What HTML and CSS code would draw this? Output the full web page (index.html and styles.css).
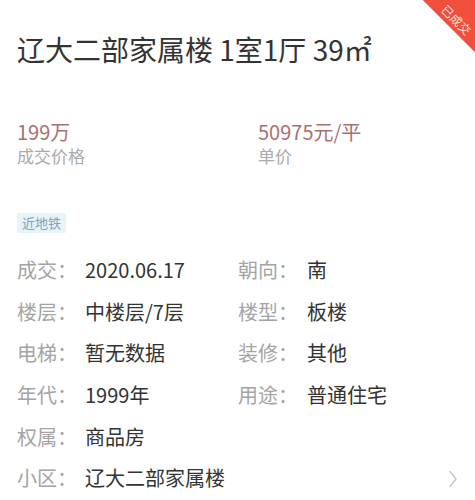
FILE: index.html
```html
<!DOCTYPE html>
<html lang="zh-CN">
<head>
<meta charset="utf-8">
<link rel="stylesheet" href="styles.css">
</head>
<body>
<div class="page">
  <div class="ribbon"><span>已成交</span></div>
  <h1 class="title">辽大二部家属楼 1室1厅 39㎡</h1>
  <div class="prices">
    <div class="price">
      <div class="price-val">199万</div>
      <div class="price-lbl">成交价格</div>
    </div>
    <div class="price">
      <div class="price-val">50975元/平</div>
      <div class="price-lbl">单价</div>
    </div>
  </div>
  <div class="tags"><span class="tag">近地铁</span></div>
  <div class="details">
    <span class="lbl">成交：</span><span class="val">2020.06.17</span>
    <span class="lbl">朝向：</span><span class="val">南</span>
    <span class="lbl">楼层：</span><span class="val">中楼层/7层</span>
    <span class="lbl">楼型：</span><span class="val">板楼</span>
    <span class="lbl">电梯：</span><span class="val">暂无数据</span>
    <span class="lbl">装修：</span><span class="val">其他</span>
    <span class="lbl">年代：</span><span class="val">1999年</span>
    <span class="lbl">用途：</span><span class="val">普通住宅</span>
    <span class="lbl">权属：</span><span class="val">商品房</span>
    <span class="spacer"></span>
    <div class="link-row">
      <span class="lbl">小区：</span><span class="val">辽大二部家属楼</span>
      <svg class="chev" width="10" height="18" viewBox="0 0 10 18"><path d="M2 1.5 L8 9 L2 16.5" fill="none" stroke="#c8c8c8" stroke-width="1.5" stroke-linecap="round" stroke-linejoin="round"/></svg>
    </div>
  </div>
</div>
</body>
</html>
```
FILE: styles.css
```css
html, body {
  margin: 0;
  padding: 0;
  background: #fff;
}
body {
  font-family: "Noto Sans CJK SC", "Noto Sans", sans-serif;
  color: #333;
  width: 475px;
  height: 500px;
  overflow: hidden;
}
.page {
  position: relative;
  padding: 0 0 0 17px;
  height: 500px;
  overflow: hidden;
}
.ribbon {
  position: absolute;
  top: -6px;
  left: 365px;
  width: 200px;
  height: 40px;
  background: #ef4f3b;
  transform: rotate(45deg);
  transform-origin: center;
  display: flex;
  align-items: flex-end;
  justify-content: center;
  padding-right: 4px;
  box-sizing: border-box;
}
.ribbon span {
  color: #fde2da;
  font-size: 12px;
  line-height: 14px;
  padding-bottom: 3px;
}
.title {
  margin: 0;
  padding-top: 29px;
  font-size: 28px;
  font-weight: normal;
  line-height: 40px;
  color: #333;
}
.prices {
  display: grid;
  grid-template-columns: 241px 1fr;
  margin-top: 49px;
}
.price-val {
  font-size: 20px;
  line-height: 27px;
  color: #a8716f;
}
.price-lbl {
  font-size: 17px;
  line-height: 24px;
  color: #aaa;
  margin-top: -1px;
}
.tags {
  margin-top: 45px;
  display: flex;
}
.tag {
  background: #e6f3f9;
  color: #8aa0b0;
  font-size: 13px;
  line-height: 20px;
  padding: 0 5px;
  border-radius: 2px;
}
.details {
  margin-top: 16px;
  display: grid;
  grid-template-columns: 68px 153px 69px 1fr;
  grid-auto-rows: 41.6px;
  align-items: center;
  font-size: 20px;
}
.lbl {
  color: #a4a4a4;
}
.val {
  color: #333;
}
.spacer {
  grid-column: span 2;
}
.link-row {
  grid-column: 1 / -1;
  display: grid;
  grid-template-columns: 68px 1fr auto;
  align-items: center;
  padding-right: 17px;
}
.chev {
  display: block;
  margin-top: 2px;
}
```
